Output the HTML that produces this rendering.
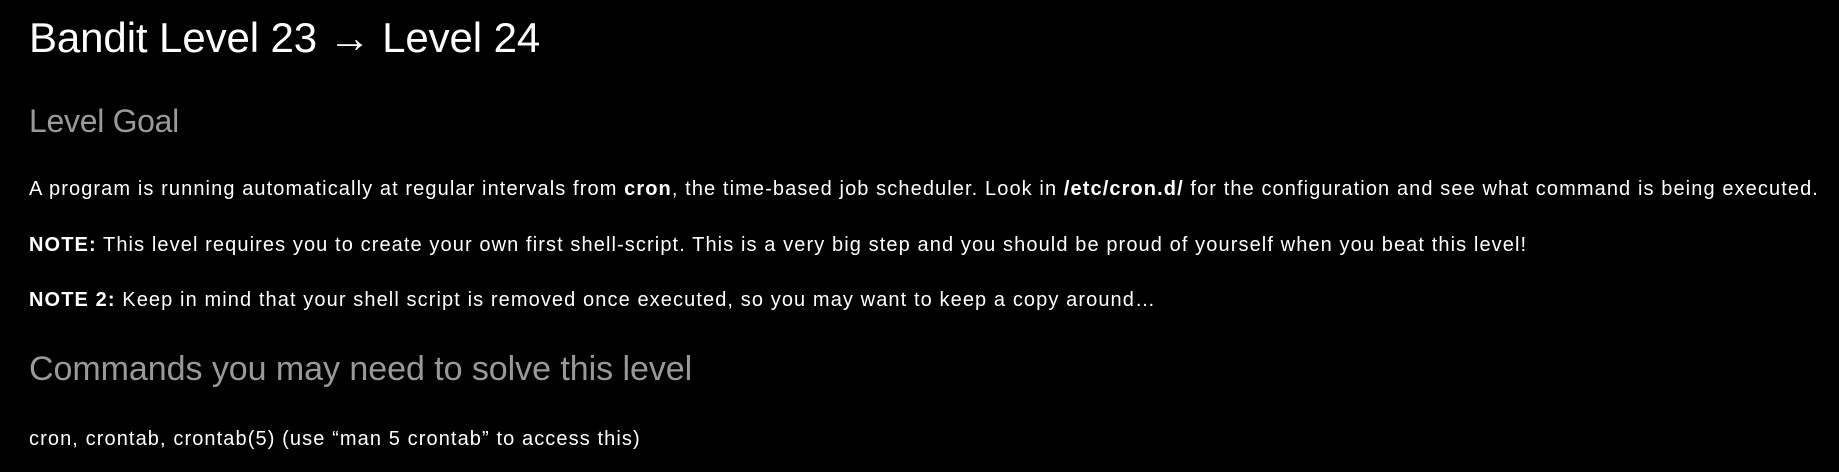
<!DOCTYPE html>
<html><head><meta charset="utf-8"><style>
html,body{margin:0;padding:0;background:#000;width:1839px;height:472px;overflow:hidden}
.t{position:absolute;left:29px;white-space:nowrap;font-family:"Liberation Sans",sans-serif;color:#fff}
.h1{font-size:42px;top:14px;letter-spacing:-0.1px}
.h2{font-size:32px;color:#999;letter-spacing:-0.3px}
.p{font-size:20px;letter-spacing:1.1px}
b{font-weight:bold}
</style></head><body>
<div class="t h1">Bandit Level 23 → Level 24</div>
<div class="t h2" style="top:103px">Level Goal</div>
<div class="t p" style="top:178px">A program is running automatically at regular intervals from <b>cron</b>, the time-based job scheduler. Look in <b>/etc/cron.d/</b> for the configuration and see what command is being executed.</div>
<div class="t p" style="top:234px"><b>NOTE:</b> This level requires you to create your own first shell-script. This is a very big step and you should be proud of yourself when you beat this level!</div>
<div class="t p" style="top:289px"><b>NOTE 2:</b> Keep in mind that your shell script is removed once executed, so you may want to keep a copy around…</div>
<div class="t h2" style="top:350px;font-size:34px;letter-spacing:-0.05px">Commands you may need to solve this level</div>
<div class="t p" style="top:428px">cron, crontab, crontab(5) (use “man 5 crontab” to access this)</div>
</body></html>
